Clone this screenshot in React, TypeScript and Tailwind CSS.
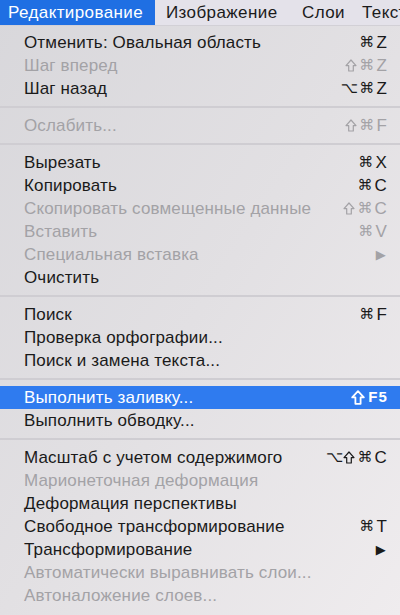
import React from "react";

type Item =
  | { sep: true }
  | { sep?: false; label: string; sc?: string; disabled?: boolean; active?: boolean; sub?: boolean };

const items: Item[] = [
  { label: "Отменить: Овальная область", sc: "⌘Z" },
  { label: "Шаг вперед", sc: "⇧⌘Z", disabled: true },
  { label: "Шаг назад", sc: "⌥⌘Z" },
  { sep: true },
  { label: "Ослабить...", sc: "⇧⌘F", disabled: true },
  { sep: true },
  { label: "Вырезать", sc: "⌘X" },
  { label: "Копировать", sc: "⌘C" },
  { label: "Скопировать совмещенные данные", sc: "⇧⌘C", disabled: true },
  { label: "Вставить", sc: "⌘V", disabled: true },
  { label: "Специальная вставка", sub: true, disabled: true },
  { label: "Очистить" },
  { sep: true },
  { label: "Поиск", sc: "⌘F" },
  { label: "Проверка орфографии..." },
  { label: "Поиск и замена текста..." },
  { sep: true },
  { label: "Выполнить заливку...", sc: "⇧F5", active: true },
  { label: "Выполнить обводку..." },
  { sep: true },
  { label: "Масштаб с учетом содержимого", sc: "⌥⇧⌘C" },
  { label: "Марионеточная деформация", disabled: true },
  { label: "Деформация перспективы" },
  { label: "Свободное трансформирование", sc: "⌘T" },
  { label: "Трансформирование", sub: true },
  { label: "Автоматически выравнивать слои...", disabled: true },
  { label: "Автоналожение слоев...", disabled: true },
];

function ShiftIcon({ active }: { active?: boolean }) {
  return active ? (
    <svg width="14" height="15" viewBox="0 0 14 15" className="mr-[2px]">
      <path d="M7 1.2 L12.8 7.4 H9.6 V13.8 H4.4 V7.4 H1.2 Z" fill="none" stroke="currentColor" strokeWidth="1.8" strokeLinejoin="round" />
    </svg>
  ) : (
    <svg width="12" height="13" viewBox="0 0 12 13" className="mr-[1px]">
      <path d="M6 1 L11 6.6 H8.3 V12 H3.7 V6.6 H1 Z" fill="none" stroke="currentColor" strokeWidth="1.2" strokeLinejoin="round" />
    </svg>
  );
}

function Shortcut({ sc, active }: { sc: string; active?: boolean }) {
  const chars = Array.from(sc);
  return (
    <span className="flex items-center">
      {chars.map((c, i) => {
        if (c === "⇧") return <ShiftIcon key={i} active={active} />;
        const sym = "⌘⌥".includes(c);
        return (
          <span
            key={i}
            className={
              sym
                ? "font-['DejaVu_Sans',sans-serif] text-[15px] ml-[1px]"
                : active
                ? "font-['Liberation_Sans',sans-serif] font-bold text-[15px] ml-[1px]"
                : "font-['Liberation_Sans',sans-serif] text-[17px] ml-[2px]"
            }
          >
            {c}
          </span>
        );
      })}
    </span>
  );
}

export default function App() {
  return (
    <div className="w-[400px] h-[615px] overflow-hidden font-['Liberation_Sans',sans-serif] bg-gradient-to-br from-[#d8d7db] via-[#e2e0e3] to-[#efecee]">
      <div className="h-[26px] flex items-center bg-[#e4e2ea] text-[17px] tracking-[0.4px] text-[#1b1b1b] border-b border-[#d2d0d6] whitespace-nowrap overflow-hidden">
        <div className="h-full bg-[#1f6fe3] text-white flex items-center pl-[8px] w-[155px] shrink-0">Редактирование</div>
        <div className="pl-[11px] w-[147px] shrink-0">Изображение</div>
        <div className="w-[60px] shrink-0">Слои</div>
        <div>Текст</div>
      </div>
      <div className="pt-[5px]">
        {items.map((it, i) =>
          it.sep ? (
            <div key={i} className="h-[14px] flex items-center">
              <div className="w-full h-[2px] bg-[#cfcdd2]" />
            </div>
          ) : (
            <div
              key={i}
              className={
                "h-[23px] flex items-center justify-between pl-[24px] pr-[13px] text-[17px] tracking-[0.15px] whitespace-nowrap " +
                (it.active
                  ? "bg-[#2f7bef] text-white"
                  : it.disabled
                  ? "text-[#a3a2a6]"
                  : "text-[#1a1a1a]")
              }
            >
              <span>{it.label}</span>
              {it.sc ? <Shortcut sc={it.sc} active={it.active} /> : null}
              {it.sub ? <span className="text-[13px] font-['DejaVu_Sans',sans-serif] mr-[1px]">▶</span> : null}
            </div>
          )
        )}
      </div>
    </div>
  );
}
